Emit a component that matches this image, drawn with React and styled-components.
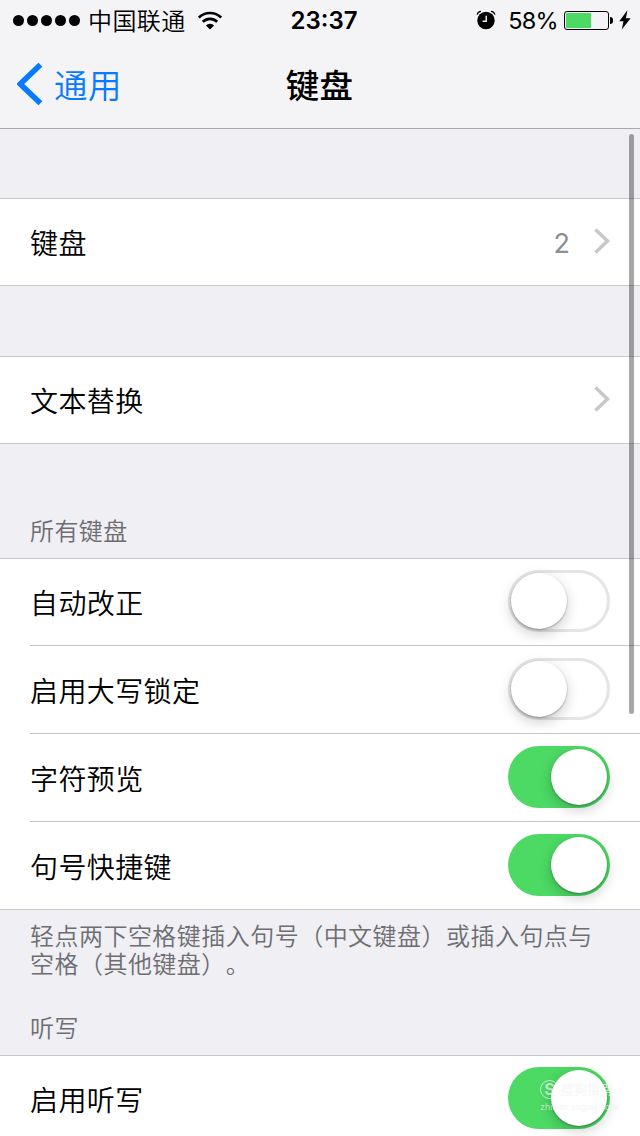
import { useState } from 'react';
import styled, { createGlobalStyle } from 'styled-components';

const App = () => {
  const [settings, setSettings] = useState({
    autoCorrect: false,
    capsLock: false,
    preview: true,
    shortcut: true,
    dictation: true,
  });

  const toggle = (key) => {
    setSettings({ ...settings, [key]: !settings[key] });
  };

  const renderSwitchRow = (key, label) => (
    <Row>
      <Label>{label}</Label>
      <Switch
        role="switch"
        aria-checked={settings[key]}
        $on={settings[key]}
        onClick={() => toggle(key)}
      >
        <Knob />
      </Switch>
    </Row>
  );

  return (
    <Screen>
      <GlobalStyle />
      <Header>
        <StatusBar>
          <StatusLeft>
            <Signal>
              <Dot />
              <Dot />
              <Dot />
              <Dot />
              <Dot />
            </Signal>
            <Carrier>中国联通</Carrier>
            <WifiIcon />
          </StatusLeft>
          <Time>23:37</Time>
          <StatusRight>
            <AlarmIcon />
            <Percent>58%</Percent>
            <Battery>
              <BatteryLevel />
            </Battery>
            <BatteryTip />
            <BoltIcon />
          </StatusRight>
        </StatusBar>
        <NavBar>
          <BackButton>
            <BackIcon />
            <BackText>通用</BackText>
          </BackButton>
          <Title>键盘</Title>
        </NavBar>
      </Header>

      <Content>
        <Spacer $height={69} />
        <Group>
          <Row>
            <Label>键盘</Label>
            <Value>2</Value>
            <Chevron />
          </Row>
        </Group>
        <Spacer $height={70} />
        <Group>
          <Row>
            <Label>文本替换</Label>
            <Chevron />
          </Row>
        </Group>
        <SectionTitle $height={114}>所有键盘</SectionTitle>
        <Group>
          {renderSwitchRow('autoCorrect', '自动改正')}
          {renderSwitchRow('capsLock', '启用大写锁定')}
          {renderSwitchRow('preview', '字符预览')}
          {renderSwitchRow('shortcut', '句号快捷键')}
        </Group>
        <Note>
          轻点两下空格键插入句号（中文键盘）或插入句点与
          <br />
          空格（其他键盘）。
        </Note>
        <SectionTitle $height={75}>听写</SectionTitle>
        <Group>{renderSwitchRow('dictation', '启用听写')}</Group>
      </Content>

      <ScrollBar />
      <Watermark>
        <WatermarkTop>
          <WatermarkLogo>S</WatermarkLogo>
          搜狗指南
        </WatermarkTop>
        <WatermarkUrl>zhinan.sogou.com</WatermarkUrl>
      </Watermark>
    </Screen>
  );
};

const WifiIcon = () => (
  <Icon width="24" height="19" viewBox="0 0 24 19">
    <g fill="none" stroke="#000" strokeWidth="2.7">
      <path d="M0.9 6.6a15.7 15.7 0 0 1 22.2 0" />
      <path d="M4.8 10.8a10.2 10.2 0 0 1 14.4 0" />
    </g>
    <path d="M12 18.6 7.9 14.4a5.8 5.8 0 0 1 8.2 0z" />
  </Icon>
);

const AlarmIcon = () => (
  <Icon width="20" height="20" viewBox="0 0 20 20">
    <circle cx="10" cy="10.5" r="8.7" />
    <path d="M10.2 5.8v5.4H6.6" fill="none" stroke="#f4f4f7" strokeWidth="1.4" />
    <path
      d="M1.1 4.6C1.6 2.8 3 1.6 5 1.4M18.9 4.6C18.4 2.8 17 1.6 15 1.4"
      fill="none"
      stroke="#000"
      strokeWidth="1.3"
    />
  </Icon>
);

const BoltIcon = () => (
  <Bolt width="12" height="20" viewBox="0 0 12 20">
    <path d="M8.4 0.3 0.3 11.3h4.2L2.8 19.6 11.6 8.2H6.9z" />
  </Bolt>
);

const BackIcon = () => (
  <Icon width="26" height="42" viewBox="0 0 26 42">
    <path d="M23.4 1.7 3.2 21 23.4 40.3" fill="none" stroke="#077aff" strokeWidth="5.6" />
  </Icon>
);

const Chevron = () => (
  <ChevronIcon width="16" height="26" viewBox="0 0 16 26">
    <path d="M1.5 1.5 13.5 13 1.5 24.5" fill="none" stroke="#c7c7cc" strokeWidth="3.6" />
  </ChevronIcon>
);

const GlobalStyle = createGlobalStyle`
  body {
    margin: 0;
    background: #efeff4;
    overflow: hidden;
  }
`;

const Screen = styled.div`
  position: relative;
  width: 640px;
  height: 1136px;
  overflow: hidden;
  background: #efeff4;
  color: #000;
  font-family: Inter, 'Noto Sans CJK SC', sans-serif;
  font-weight: 350;
  text-spacing-trim: space-all;
`;

const Header = styled.header`
  height: 128px;
  background: #f4f4f7;
  border-bottom: 1px solid #a9a9ad;
`;

const StatusBar = styled.div`
  display: grid;
  grid-template-columns: 1fr auto 1fr;
  align-items: center;
  height: 40px;
  padding: 0 9px 0 13px;
`;

const Icon = styled.svg`
  display: block;
  flex-shrink: 0;
`;

const StatusLeft = styled.div`
  display: flex;
  align-items: center;
`;

const Signal = styled.div`
  display: flex;
  gap: 3px;
  margin-right: 8px;
`;

const Dot = styled.span`
  width: 11px;
  height: 11px;
  border-radius: 50%;
  background: #000;
`;

const Carrier = styled.span`
  margin-right: 12px;
  font-family: 'Noto Sans CJK SC', sans-serif;
  font-size: 24px;
  line-height: 40px;
  letter-spacing: 0.4px;
`;

const Time = styled.span`
  padding: 2px 0 0 4px;
  font-size: 24px;
  font-weight: 600;
  line-height: 38px;
`;

const StatusRight = styled.div`
  display: flex;
  align-items: center;
  justify-content: flex-end;
`;

const Percent = styled.span`
  margin: 0 6px 0 12px;
  padding-top: 2px;
  font-size: 23.5px;
  font-weight: 400;
  line-height: 38px;
  letter-spacing: -0.7px;
`;

const Battery = styled.div`
  box-sizing: border-box;
  width: 45px;
  height: 19px;
  padding: 1px;
  border: 1px solid #000;
  border-radius: 3px;
`;

const BatteryLevel = styled.div`
  width: 25px;
  height: 15px;
  border-radius: 1px 0 0 1px;
  background: #4cd964;
`;

const BatteryTip = styled.div`
  width: 3px;
  height: 7px;
  margin-left: 1px;
  border-radius: 0 3px 3px 0;
  background: #000;
`;

const Bolt = styled(Icon)`
  margin-left: 6px;
`;

const NavBar = styled.nav`
  display: grid;
  grid-template-columns: 1fr auto 1fr;
  align-items: center;
  height: 88px;
  padding: 0 17px;
`;

const BackButton = styled.button`
  display: flex;
  align-items: center;
  gap: 11px;
  padding: 0;
  border: none;
  background: none;
  color: #077aff;
  font-family: inherit;
  font-weight: inherit;
  cursor: pointer;
`;

const BackText = styled.span`
  padding-top: 4px;
  font-size: 33.5px;
  line-height: 38px;
  letter-spacing: 0.5px;
`;

const Title = styled.h1`
  margin: 0;
  padding-top: 4px;
  font-size: 33.5px;
  font-weight: 500;
  line-height: 46px;
  letter-spacing: 0.3px;
  text-indent: -1px;
`;

const Content = styled.main`
  display: flex;
  flex-direction: column;
`;

const Spacer = styled.div`
  height: ${props => props.$height}px;
`;

const Group = styled.section`
  background: #fff;
  box-shadow: inset 0 1px #c8c7cc, inset 0 -1px #c8c7cc;
`;

const Row = styled.div`
  display: flex;
  align-items: center;
  height: 88px;
  margin-left: 30px;
  padding-right: 30px;

  &:not(:last-child) {
    box-shadow: inset 0 -1px #c8c7cc;
  }
`;

const Label = styled.span`
  flex: 1;
  padding-top: 4px;
  font-size: 28px;
  line-height: 40px;
  letter-spacing: 0.4px;
`;

const Value = styled.span`
  margin-right: 24px;
  padding-top: 3px;
  color: #8e8e93;
  font-size: 27px;
  font-weight: 400;
  line-height: 40px;
`;

const ChevronIcon = styled(Icon)`
  margin-bottom: 2px;
`;

const Switch = styled.button`
  box-sizing: border-box;
  display: flex;
  justify-content: ${props => props.$on ? 'flex-end' : 'flex-start'};
  width: 102px;
  height: 62px;
  margin: 0 0 2px;
  padding: 3px;
  border: none;
  border-radius: 31px;
  background: ${props => props.$on ? '#4cd964' : '#fff'};
  box-shadow: ${props => props.$on ? 'none' : 'inset 0 0 0 3px #e5e5e5'};
  cursor: pointer;
`;

const Knob = styled.span`
  width: 56px;
  height: 56px;
  border-radius: 50%;
  background: #fff;
  box-shadow: 0 1px 2px rgba(0, 0, 0, 0.3), 0 5px 14px rgba(0, 0, 0, 0.2);
`;

const SectionTitle = styled.h2`
  box-sizing: border-box;
  display: flex;
  align-items: flex-end;
  height: ${props => props.$height}px;
  margin: 0;
  padding: 0 30px 9px;
  color: #6d6d72;
  font-size: 24px;
  font-weight: 350;
  line-height: 34px;
  letter-spacing: 0.4px;
`;

const Note = styled.p`
  height: 56px;
  margin: 0;
  padding: 13px 0 1px 30px;
  color: #6d6d72;
  font-size: 24px;
  line-height: 28px;
  letter-spacing: 0.47px;
  white-space: nowrap;
`;

const ScrollBar = styled.div`
  position: absolute;
  top: 134px;
  left: 629px;
  width: 5px;
  height: 580px;
  border-radius: 3px;
  background: rgba(0, 0, 0, 0.35);
`;

const Watermark = styled.div`
  position: absolute;
  top: 1079px;
  left: 540px;
  color: rgba(255, 255, 255, 0.65);
  text-shadow: 0 0 1px rgba(0, 0, 0, 0.08);
  font-weight: 400;
  pointer-events: none;
`;

const WatermarkTop = styled.div`
  display: flex;
  align-items: center;
  gap: 2px;
  font-size: 13px;
  line-height: 20px;
`;

const WatermarkLogo = styled.span`
  box-sizing: border-box;
  width: 19px;
  height: 19px;
  border: 1.5px solid rgba(255, 255, 255, 0.65);
  border-radius: 50%;
  font-size: 16px;
  font-weight: 700;
  line-height: 16px;
  text-align: center;
`;

const WatermarkUrl = styled.div`
  font-size: 9px;
  line-height: 16px;
`;

export default App;
